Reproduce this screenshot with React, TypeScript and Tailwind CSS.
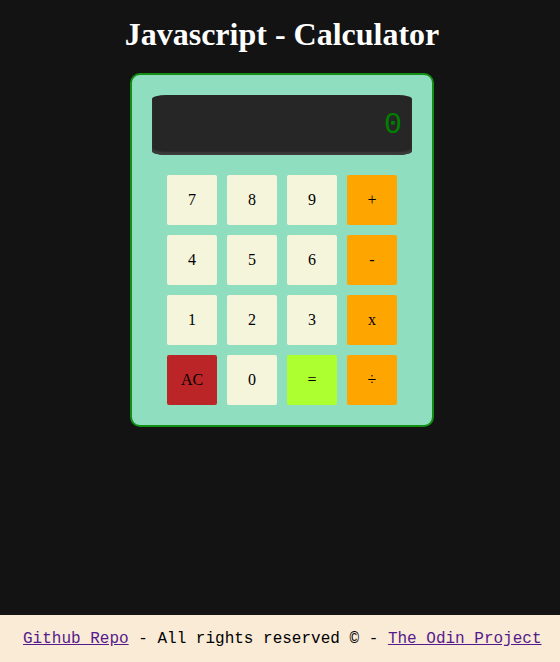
const keys = [
  { label: '7', color: 'bg-[#f5f5dc]' },
  { label: '8', color: 'bg-[#f5f5dc]' },
  { label: '9', color: 'bg-[#f5f5dc]' },
  { label: '+', color: 'bg-[#ffa500]' },
  { label: '4', color: 'bg-[#f5f5dc]' },
  { label: '5', color: 'bg-[#f5f5dc]' },
  { label: '6', color: 'bg-[#f5f5dc]' },
  { label: '-', color: 'bg-[#ffa500]' },
  { label: '1', color: 'bg-[#f5f5dc]' },
  { label: '2', color: 'bg-[#f5f5dc]' },
  { label: '3', color: 'bg-[#f5f5dc]' },
  { label: 'x', color: 'bg-[#ffa500]' },
  { label: 'AC', color: 'bg-[#bc2528]' },
  { label: '0', color: 'bg-[#f5f5dc]' },
  { label: '=', color: 'bg-[#adff2f]' },
  { label: '÷', color: 'bg-[#ffa500]' },
]

export default function App() {
  return (
    <div className="flex min-h-screen flex-col bg-[#131313]">
      <main className="flex flex-1 flex-col items-center pt-[16px] pl-[4px]">
        <h1 className="mb-[20px] font-['Liberation_Serif',serif] text-[32px] font-bold leading-[37px] text-white">
          Javascript - Calculator
        </h1>
        <div className="w-[304px] rounded-[10px] border-2 border-[#128f12] bg-[#8fdec0] pt-[20px] pb-[20px]">
          <div className="mx-auto flex h-[60px] w-[260px] items-center justify-end rounded-[14px/4px] bg-[#262626] pr-[10px] shadow-[inset_0_-3px_2px_#3c3c3c]">
            <span className="font-['Liberation_Mono',monospace] text-[30px] leading-none text-[#008000]">0</span>
          </div>
          <div className="mx-auto mt-[20px] grid w-[230px] grid-cols-4 gap-[10px]">
            {keys.map((k) => (
              <button
                key={k.label}
                type="button"
                className={`flex h-[50px] w-[50px] items-center justify-center rounded-[2px] font-['Liberation_Serif',serif] text-[16px] text-black ${k.color}`}
              >
                {k.label}
              </button>
            ))}
          </div>
        </div>
      </main>
      <footer className="flex h-[47px] items-center bg-[#faebd7] pl-[23px] pt-[1px] font-['Liberation_Mono',monospace] text-[16px] text-black">
        <span>
          <a href="#" className="text-[#551a8b] underline">Github Repo</a>
          {' - All rights reserved © - '}
          <a href="#" className="text-[#551a8b] underline">The Odin Project</a>
        </span>
      </footer>
    </div>
  )
}
